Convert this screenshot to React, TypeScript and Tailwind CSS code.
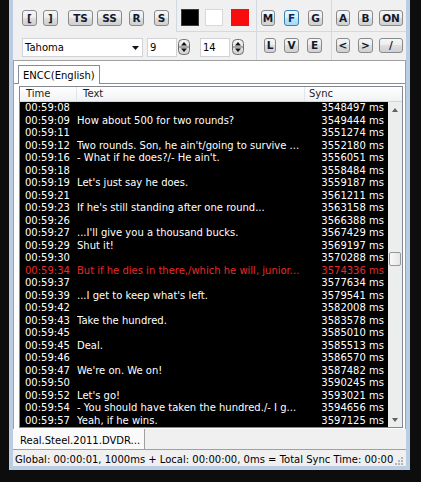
import React from 'react';

type Row = { time: string; text: string; sync: string; red?: boolean };

const rows: Row[] = [
  { time: '00:59:08', text: '', sync: '3548497' },
  { time: '00:59:09', text: 'How about 500 for two rounds?', sync: '3549444' },
  { time: '00:59:11', text: '', sync: '3551274' },
  { time: '00:59:12', text: "Two rounds. Son, he ain't/going to survive ...", sync: '3552180' },
  { time: '00:59:16', text: "- What if he does?/- He ain't.", sync: '3556051' },
  { time: '00:59:18', text: '', sync: '3558484' },
  { time: '00:59:19', text: "Let's just say he does.", sync: '3559187' },
  { time: '00:59:21', text: '', sync: '3561211' },
  { time: '00:59:23', text: "If he's still standing after one round...", sync: '3563158' },
  { time: '00:59:26', text: '', sync: '3566388' },
  { time: '00:59:27', text: "...I'll give you a thousand bucks.", sync: '3567429' },
  { time: '00:59:29', text: 'Shut it!', sync: '3569197' },
  { time: '00:59:30', text: '', sync: '3570288' },
  { time: '00:59:34', text: 'But if he dies in there,/which he will, junior...', sync: '3574336', red: true },
  { time: '00:59:37', text: '', sync: '3577634' },
  { time: '00:59:39', text: "...I get to keep what's left.", sync: '3579541' },
  { time: '00:59:42', text: '', sync: '3582008' },
  { time: '00:59:43', text: 'Take the hundred.', sync: '3583578' },
  { time: '00:59:45', text: '', sync: '3585010' },
  { time: '00:59:45', text: 'Deal.', sync: '3585513' },
  { time: '00:59:46', text: '', sync: '3586570' },
  { time: '00:59:47', text: "We're on. We on!", sync: '3587482' },
  { time: '00:59:50', text: '', sync: '3590245' },
  { time: '00:59:52', text: "Let's go!", sync: '3593021' },
  { time: '00:59:54', text: '- You should have taken the hundred./- I g...', sync: '3594656' },
  { time: '00:59:57', text: 'Yeah, if he wins.', sync: '3597125' },
];

function Btn({ label, className, active }: { label: string; className: string; active?: boolean }) {
  return (
    <div
      className={
        'flex shrink-0 items-center justify-center rounded-[3px] border text-[10.5px] font-bold leading-none ' +
        (active
          ? 'border-[#3c7fb1] bg-[linear-gradient(#eaf6fd,#d9f0fc_50%,#bee6fd_50%,#a7d9f5)] text-[#0a2a5c] '
          : 'border-[#8a8a8a] bg-[linear-gradient(#f6f6f6,#ececec_50%,#dedede_50%,#d0d0d0)] text-[#141a2e] ') +
        className
      }
    >
      {label}
    </div>
  );
}

function Spinner({ className }: { className: string }) {
  return (
    <svg width="12" height="16" viewBox="0 0 12 16" className={'shrink-0 ' + className}>
      <defs>
        <linearGradient id="spg" x1="0" y1="0" x2="0" y2="1">
          <stop offset="0" stopColor="#f6f6f6" />
          <stop offset="1" stopColor="#cfcfcf" />
        </linearGradient>
      </defs>
      <rect x="0.5" y="0.5" width="11" height="15" rx="4" fill="url(#spg)" stroke="#6f6f6f" />
      <line x1="1" y1="8" x2="11" y2="8" stroke="#6f6f6f" />
      <path d="M3 6.5 L6 3 L9 6.5 Z" fill="#111" />
      <path d="M3 9.5 L6 13 L9 9.5 Z" fill="#111" />
    </svg>
  );
}

function Toolbar() {
  return (
    <div className="flex h-[60px] shrink-0 flex-col">
      {/* first row */}
      <div className="flex h-[32px]">
        <div className="flex w-[163px] shrink-0 items-start pt-[10px]">
          <Btn label="[" className="ml-[9px] h-[16px] w-[15px]" />
          <Btn label="]" className="ml-[6px] h-[16px] w-[15px]" />
          <Btn label="TS" className="ml-[10px] h-[16px] w-[25px]" />
          <Btn label="SS" className="ml-[4px] h-[16px] w-[25px]" />
          <Btn label="R" className="ml-[7px] h-[16px] w-[15px]" />
          <Btn label="S" className="ml-[10px] h-[16px] w-[15px]" />
        </div>
        <div className="flex w-[80px] shrink-0 items-start border-b border-l border-[#d3d9e0] pt-[9px]">
          <div className="ml-[4px] h-[17px] w-[18px] border border-[#3a3a3a] bg-black" />
          <div className="ml-[6px] h-[17px] w-[18px] border border-[#d8d8d8] bg-white" />
          <div className="ml-[8px] h-[17px] w-[18px] bg-[#f70d0d]" />
        </div>
        <div className="flex w-[75px] shrink-0 items-start border-b border-l border-[#d3d9e0] pt-[10px]">
          <Btn label="M" className="ml-[4px] h-[16px] w-[14px]" />
          <Btn label="F" active className="ml-[9px] h-[16px] w-[15px]" />
          <Btn label="G" className="ml-[9px] h-[16px] w-[15px]" />
        </div>
        <div className="flex flex-1 items-start border-b border-l border-[#d3d9e0] pt-[10px]">
          <Btn label="A" className="ml-[4px] h-[16px] w-[14px]" />
          <Btn label="B" className="ml-[8px] h-[16px] w-[15px]" />
          <Btn label="ON" className="ml-[6px] h-[16px] w-[24px]" />
        </div>
      </div>
      {/* second row */}
      <div className="flex h-[28px]">
        <div className="flex w-[243px] shrink-0 items-start pt-[6px]">
          <div className="ml-[9px] flex h-[19px] w-[121px] shrink-0 items-center justify-between border border-[#d0d4d9] bg-white pl-[2px] pr-[3px] text-[10px] text-black">
            <span>Tahoma</span>
            <svg width="7" height="4" viewBox="0 0 7 4">
              <path d="M0 0 L7 0 L3.5 4 Z" fill="#111" />
            </svg>
          </div>
          <div className="ml-[4px] flex h-[19px] w-[30px] shrink-0 items-center border border-[#d0d4d9] bg-white pl-[2px] text-[10px] text-black">
            9
          </div>
          <Spinner className="ml-[1px] mt-[1px]" />
          <div className="ml-[10px] flex h-[19px] w-[30px] shrink-0 items-center border border-[#d0d4d9] bg-white pl-[2px] text-[10px] text-black">
            14
          </div>
          <Spinner className="ml-[2px] mt-[1px]" />
        </div>
        <div className="flex w-[75px] shrink-0 items-start border-l border-[#d3d9e0] pt-[6px]">
          <Btn label="L" className="ml-[7px] h-[15px] w-[12px]" />
          <Btn label="V" className="ml-[8px] h-[15px] w-[15px]" />
          <Btn label="E" className="ml-[8px] h-[15px] w-[15px]" />
        </div>
        <div className="flex flex-1 items-start border-l border-[#d3d9e0] pt-[6px]">
          <Btn label="<" className="ml-[4px] h-[15px] w-[14px]" />
          <Btn label=">" className="ml-[8px] h-[15px] w-[15px]" />
          <Btn label="/" className="ml-[6px] h-[15px] w-[24px]" />
        </div>
      </div>
    </div>
  );
}

function SubtitleList() {
  return (
    <div className="ml-[5px] flex h-[342px] w-[384px] flex-col border border-[#828790]">
      <div className="flex h-[15px] shrink-0 border-b border-[#d5d5d5] bg-linear-to-b from-white to-[#f1f2f4] text-[10px] leading-[14px] text-[#1e1e1e]">
        <div className="w-[57px] shrink-0 border-r border-[#e3e5e8] pl-[6px]">Time</div>
        <div className="w-[228px] shrink-0 border-r border-[#e3e5e8] pl-[6px]">Text</div>
        <div className="flex-1 pl-[4px]">Sync</div>
      </div>
      <div className="flex h-[325px] overflow-hidden">
        <div className="flex-1 overflow-hidden bg-black text-[10px]">
          {rows.map((r, i) => (
            <div
              key={i}
              className={
                'flex h-[12.5px] items-center whitespace-nowrap leading-[12.5px] ' +
                (r.red ? 'text-[#e62a2a]' : 'text-white')
              }
            >
              <div className="w-[57px] shrink-0 pl-[5px]">{r.time}</div>
              <div className="w-[228px] shrink-0 overflow-hidden">{r.text}</div>
              <div className="flex-1 pr-[4px] text-right">{r.sync} ms</div>
            </div>
          ))}
        </div>
        <div className="flex w-[14px] shrink-0 flex-col bg-[#eceded]">
          <div className="flex h-[15px] items-center justify-center">
            <svg width="6" height="4" viewBox="0 0 6 4">
              <path d="M0 4 L3 0 L6 4 Z" fill="#606060" />
            </svg>
          </div>
          <div className="h-[135px]" />
          <div className="mx-[1px] h-[14px] rounded-[2px] border border-[#979797] bg-[linear-gradient(90deg,#f8f8f8,#e6e6e6)]" />
          <div className="flex-1" />
          <div className="flex h-[15px] items-center justify-center">
            <svg width="6" height="4" viewBox="0 0 6 4">
              <path d="M0 0 L6 0 L3 4 Z" fill="#606060" />
            </svg>
          </div>
        </div>
      </div>
    </div>
  );
}

export default function App() {
  return (
    <div className="h-[482px] w-[421px] bg-[#0d0d0d] pb-[12px] pl-[9px] pr-[11px] font-['DejaVu_Sans',sans-serif]">
      <div className="flex h-[470px] flex-col border-x-4 border-b-4 border-[#b9cde3] bg-[#f0f0f0]">
        <Toolbar />

        <div className="flex h-[369px] shrink-0 flex-col border-x border-t border-[#a0a0a0] bg-white">
          <div className="flex h-[22px] shrink-0 items-end pl-[4px]">
            <div className="relative z-10 -mb-px flex h-[19px] items-center border-x border-t border-[#898c95] bg-white px-[4px] text-[10px] text-black">
              ENCC(English)
            </div>
          </div>
          <div className="flex-1 border-t border-[#898c95] pt-[2px]">
            <SubtitleList />
          </div>
        </div>

        <div className="flex h-[21px] shrink-0 border-b border-[#a0a0a0]">
          <div className="flex w-[132px] items-center border-r border-[#a0a0a0] bg-[#fafafa] pl-[7px] pt-[2px] text-[10px] text-black">
            Real.Steel.2011.DVDR...
          </div>
        </div>

        <div className="flex h-[16px] shrink-0 items-center justify-between pl-[2px] pt-[2px] text-[10px] text-black">
          <span className="whitespace-nowrap">Global: 00:00:01, 1000ms + Local: 00:00:00, 0ms = Total Sync Time: 00:00</span>
          <svg width="10" height="10" viewBox="0 0 10 10" className="mr-[2px] self-end">
            <rect x="7" y="1" width="2" height="2" fill="#b5b5b5" />
            <rect x="4" y="4" width="2" height="2" fill="#b5b5b5" />
            <rect x="7" y="4" width="2" height="2" fill="#b5b5b5" />
            <rect x="1" y="7" width="2" height="2" fill="#b5b5b5" />
            <rect x="4" y="7" width="2" height="2" fill="#b5b5b5" />
            <rect x="7" y="7" width="2" height="2" fill="#b5b5b5" />
          </svg>
        </div>
      </div>
    </div>
  );
}
